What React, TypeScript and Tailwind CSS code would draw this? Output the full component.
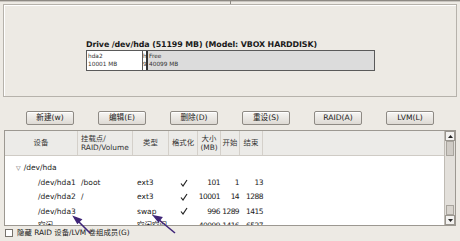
import React from 'react';

const FONT = "font-['DejaVu_Sans','Noto_Sans_CJK_SC',sans-serif]";

const BUTTONS = ['新建(w)', '编辑(E)', '删除(D)', '重设(S)', 'RAID(A)', 'LVM(L)'];

type Row = {
  dev: string;
  mount?: string;
  type?: string;
  fmt?: boolean;
  size?: string;
  start?: string;
  end?: string;
  top?: boolean;
};

const ROWS: Row[] = [
  { dev: '/dev/hda', top: true },
  { dev: '/dev/hda1', mount: '/boot', type: 'ext3', fmt: true, size: '101', start: '1', end: '13' },
  { dev: '/dev/hda2', mount: '/', type: 'ext3', fmt: true, size: '10001', start: '14', end: '1288' },
  { dev: '/dev/hda3', type: 'swap', fmt: true, size: '996', start: '1289', end: '1415' },
  { dev: '空闲', type: '空闲空间', size: '40099', start: '1416', end: '6527' },
];

const COLS = 'grid grid-cols-[73px_55px_36px_29px_23px_19px_23px_1fr]';

function Check() {
  return (
    <svg width="8" height="8" viewBox="0 0 8 8">
      <path d="M1 4.5 L3 7 L7 1" fill="none" stroke="#222" strokeWidth="1.2" />
    </svg>
  );
}

export default function App() {
  return (
    <div className={`${FONT} w-[460px] h-[241px] bg-[#edeae4] overflow-hidden relative text-[#1a1a1a]`}>
      {/* top edge */}
      <div className="h-[2px] bg-[#8d8983] border-b border-[#c9c5bf]" />
      <div className="absolute left-[230px] top-0 w-[1px] h-[4px] bg-[#8d8983]" />

      {/* drive frame */}
      <div className="mx-[3px] mt-[2px] h-[93px] border border-[#b6b2ab] shadow-[inset_1px_1px_0_#fff] flex flex-col items-start pl-[82px] pt-[35px]">
        <div className="text-[7.9px] font-bold leading-[10px] tracking-[-0.1px]">
          Drive /dev/hda (51199 MB) (Model: VBOX HARDDISK)
        </div>
        <div className="flex w-[289px] h-[21px] border border-[#5a5a5a] text-[5.8px] leading-[7.5px] text-[#333]">
          <div className="w-[56px] bg-white border-r border-[#5a5a5a] pl-[1px] pt-[2px]">
            <div>hda2</div>
            <div>10001 MB</div>
          </div>
          <div className="w-[5px] bg-white border-r-2 border-[#333] overflow-hidden pt-[2px]">
            <div>h</div>
            <div>9</div>
          </div>
          <div className="flex-1 bg-[#dcdcdc] pl-[1px] pt-[2px]">
            <div>Free</div>
            <div>40099 MB</div>
          </div>
        </div>
      </div>

      {/* buttons */}
      <div className="flex justify-center gap-[24px] mt-[14px]">
        {BUTTONS.map((b) => (
          <div
            key={b}
            className="w-[48px] h-[14px] rounded-[2px] border border-[#8e8a84] bg-gradient-to-b from-[#f7f6f4] to-[#dedad4] shadow-[inset_0_1px_0_#fff] flex items-center justify-center text-[7.6px] leading-none"
          >
            {b}
          </div>
        ))}
      </div>

      {/* table */}
      <div className="mx-[4px] mt-[5px] h-[96px] border border-[#9c9891] flex bg-white">
        <div className="flex-1 flex flex-col overflow-hidden">
          <div className={`${COLS} h-[25px] shrink-0 bg-[#ecebe8] border-b border-[#cfcbc5] text-[7.4px] leading-[9.5px] text-[#333]`}>
            <div className="flex items-center justify-center border-r border-[#d4d0ca]">设备</div>
            <div className="flex flex-col justify-center pl-[3px] border-r border-[#d4d0ca]">
              <div>挂载点/</div>
              <div>RAID/Volume</div>
            </div>
            <div className="flex items-center justify-center border-r border-[#d4d0ca]">类型</div>
            <div className="flex items-center justify-center border-r border-[#d4d0ca]">格式化</div>
            <div className="flex flex-col items-center justify-center border-r border-[#d4d0ca]">
              <div>大小</div>
              <div>(MB)</div>
            </div>
            <div className="flex items-center justify-center border-r border-[#d4d0ca]">开始</div>
            <div className="flex items-center justify-center border-r border-[#d4d0ca]">结束</div>
            <div />
          </div>
          <div className="pt-[5px] text-[7.5px] leading-none">
            {ROWS.map((r) => (
              <div key={r.dev} className={`${COLS} h-[14.4px] items-center`}>
                {r.top ? (
                  <div className="col-span-3 flex items-center pl-[11px] gap-[3px]">
                    <span className="text-[6px] text-[#555]">▽</span>
                    <span>{r.dev}</span>
                  </div>
                ) : (
                  <>
                    <div className="pl-[33px]">{r.dev}</div>
                    <div className="pl-[3px]">{r.mount}</div>
                    <div className="pl-[4px]">{r.type}</div>
                    <div className="flex justify-center pl-[1px]">{r.fmt && <Check />}</div>
                    <div className="text-right pr-[1px] tracking-[-0.5px]">{r.size}</div>
                    <div className="text-right pr-[1px] tracking-[-0.6px]">{r.start}</div>
                    <div className="text-right pr-[0px] tracking-[-0.5px]">{r.end}</div>
                    <div />
                  </>
                )}
              </div>
            ))}
          </div>
        </div>
        {/* scrollbar */}
        <div className="w-[11px] bg-[#e3e0db] border-l border-[#bfbbb4] flex flex-col">
          <div className="h-[10px] border border-[#9a968f] bg-[#f3f2f0] flex items-center justify-center">
            <svg width="5" height="3" viewBox="0 0 5 3"><path d="M0 3 L2.5 0 L5 3 Z" fill="#222" /></svg>
          </div>
          <div className="h-[15px] mx-[1px] border border-[#a8a49d] bg-[#cfcbc5]" />
          <div className="flex-1" />
          <div className="h-[10px] mx-[1px] border border-[#a8a49d] bg-[#d8d4ce]" />
          <div className="h-[10px] border border-[#9a968f] bg-[#f3f2f0] flex items-center justify-center">
            <svg width="5" height="3" viewBox="0 0 5 3"><path d="M0 0 L2.5 3 L5 0 Z" fill="#222" /></svg>
          </div>
        </div>
      </div>

      {/* checkbox row */}
      <div className="flex items-center gap-[4px] pl-[5px] mt-[3px] text-[7.4px] leading-none text-[#222]">
        <div className="w-[8px] h-[8px] border border-[#77736d] bg-white" />
        <span>隐藏 RAID 设备/LVM 卷组成员(G)</span>
      </div>

      {/* annotation arrows */}
      <svg className="absolute left-0 top-0 pointer-events-none" width="460" height="241">
        <g stroke="#3f2578" strokeWidth="1.6" fill="#3f2578">
          <line x1="90" y1="233" x2="77" y2="220" />
          <path d="M74 217 L81 219.5 L77.5 223 Z" />
          <line x1="175" y1="233" x2="158" y2="219" />
          <path d="M154 216 L161.5 217.5 L158.5 221.5 Z" />
        </g>
      </svg>
    </div>
  );
}
